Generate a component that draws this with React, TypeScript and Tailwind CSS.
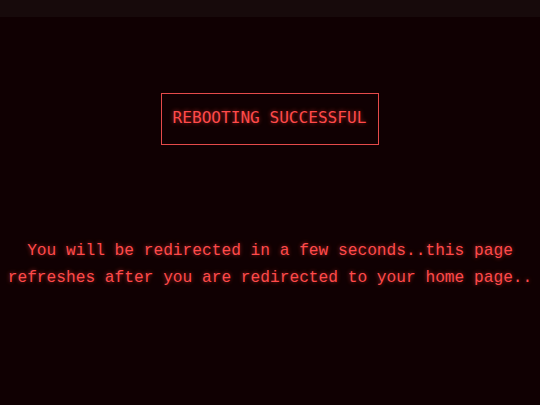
export default function App() {
  return (
    <div className="flex h-[405px] w-[540px] flex-col bg-[#100002] font-['Liberation_Mono',monospace] text-[#ff4a4a]">
      <div className="h-[17px] shrink-0 bg-[#170a0b]" />
      <div className="flex flex-col items-center pt-[76px]">
        <div className="border border-[#e54a4a] pb-[14px] pl-[11px] pr-[12px] pt-[12px] font-['DejaVu_Sans_Mono',monospace] text-[16.1px] leading-6 [text-shadow:0_0_4px_rgba(255,60,60,0.6)]">
          REBOOTING SUCCESSFUL
        </div>
        <p className="mt-[93px] whitespace-nowrap text-center text-[16.2px] leading-[27px] [text-shadow:0_0_4px_rgba(255,60,60,0.6)]">
          You will be redirected in a few seconds..this page
          <br />
          refreshes after you are redirected to your home page..
        </p>
      </div>
    </div>
  );
}
